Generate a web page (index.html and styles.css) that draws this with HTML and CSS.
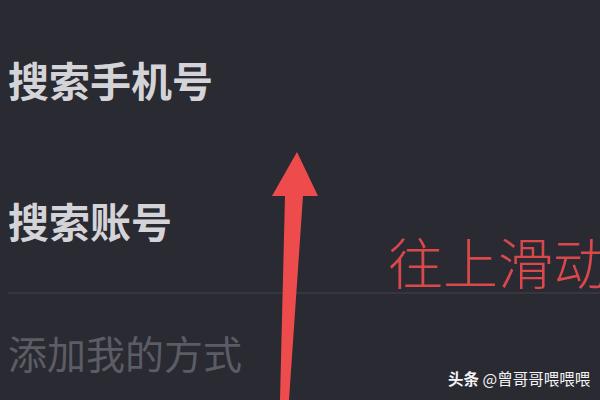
FILE: index.html
```html
<!DOCTYPE html>
<html lang="zh-CN">
<head>
<meta charset="utf-8">
<link rel="stylesheet" href="styles.css">
</head>
<body>
<div class="screen">
  <div class="menu">
    <div class="item item-phone">搜索手机号</div>
    <div class="item item-account">搜索账号</div>
    <div class="divider"></div>
    <div class="section">添加我的方式</div>
  </div>
  <svg class="arrow" width="600" height="400" viewBox="0 0 600 400">
    <polygon points="297,152 318,196 303,196 289,400 280,400 285,196 272,196" fill="#ee4c4c"/>
  </svg>
  <div class="hint">往上滑动</div>
  <div class="watermark"><b>头条</b> @曾哥哥喂喂喂</div>
</div>
</body>
</html>
```

FILE: styles.css
```css
html, body {
  margin: 0;
  padding: 0;
}
body {
  width: 600px;
  height: 400px;
  overflow: hidden;
  background: #2a2a33;
  font-family: "Noto Sans CJK SC", "Noto Sans", sans-serif;
}
.screen {
  position: relative;
  width: 600px;
  height: 400px;
  background: #2a2a33;
}
.menu {
  display: flex;
  flex-direction: column;
  padding-top: 59px;
}
.item {
  padding-left: 8px;
  font-size: 41px;
  line-height: 1;
  font-weight: 600;
  color: #d4d4d8;
}
.item-account {
  margin-top: 100px;
}
.divider {
  margin-top: 51px;
  margin-left: 8px;
  height: 2px;
  background: #363641;
}
.section {
  margin-top: 39px;
  padding-left: 8px;
  font-size: 39px;
  line-height: 1;
  color: #5c5c64;
}
.arrow {
  position: absolute;
  left: 0;
  top: 0;
}
.hint {
  position: absolute;
  left: 388px;
  top: 233px;
  font-size: 55px;
  line-height: 1;
  font-weight: 300;
  color: #d9484a;
  white-space: nowrap;
}
.watermark {
  position: absolute;
  left: 448px;
  top: 371px;
  font-size: 15.5px;
  line-height: 1;
  color: #f4f4f4;
  white-space: nowrap;
}
.watermark b {
  font-weight: 700;
}
```
